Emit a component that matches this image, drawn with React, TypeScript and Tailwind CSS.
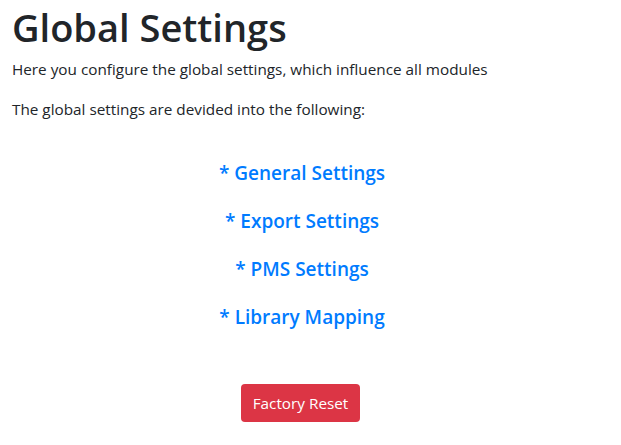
import React from "react";

export default function App() {
  const links = ["* General Settings", "* Export Settings", "* PMS Settings", "* Library Mapping"];
  return (
    <div className="w-[604px] px-3 text-[#212529] bg-white" style={{ fontFamily: '"Open Sans", "Noto Sans", sans-serif' }}>
      <h1 className="text-[38px] leading-[52px] font-semibold mb-1 pt-[1px]">Global Settings</h1>
      <p className="text-[15.3px] leading-6 mb-4">Here you configure the global settings, which influence all modules</p>
      <p className="text-[15.3px] leading-6 mb-4">The global settings are devided into the following:</p>
      <div className="flex flex-col items-center gap-6 mt-[40px]">
        {links.map((l) => (
          <a key={l} href="#" className="text-[19px] leading-6 font-semibold text-[#007bff]">
            {l}
          </a>
        ))}
      </div>
      <div className="flex justify-center mt-[55px]">
        <button className="h-[38px] px-3 mr-[3px] rounded bg-[#dc3545] text-white text-[15.3px] leading-6">Factory Reset</button>
      </div>
    </div>
  );
}
